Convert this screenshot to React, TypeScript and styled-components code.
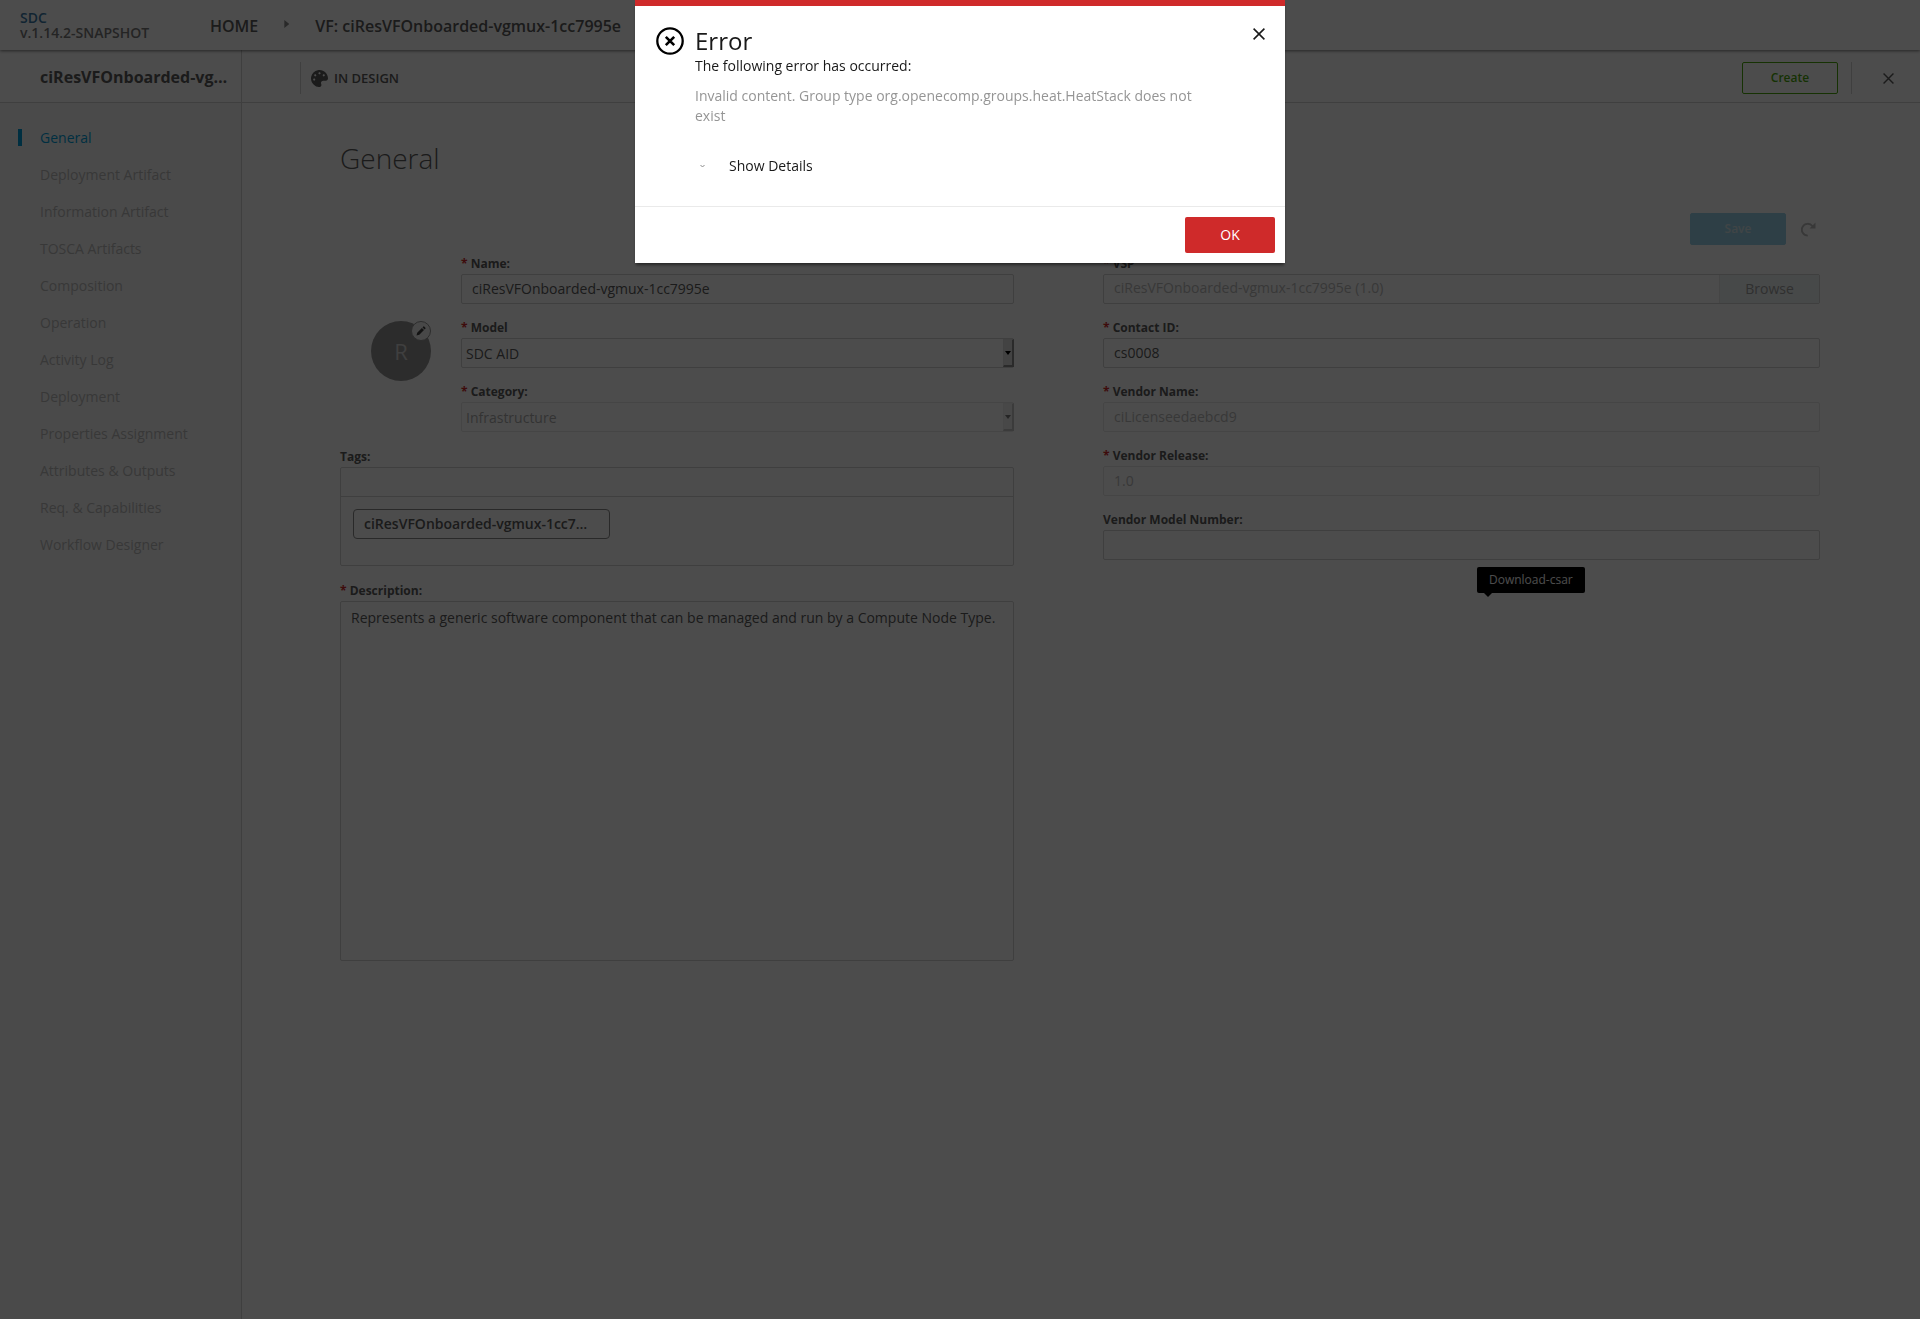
import React from 'react';
import styled, { createGlobalStyle } from 'styled-components';

const GlobalStyle = createGlobalStyle`
  *, *::before, *::after { box-sizing: border-box; }
  body {
    margin: 0;
    background: #fff;
    color: #5a5a5a;
    font-family: 'Open Sans', 'Noto Sans', sans-serif;
    font-size: 14px;
    line-height: 20px;
  }
  button, input, select, textarea { font: inherit; color: inherit; margin: 0; }
  button { cursor: pointer; }
  h1, h2, p, ul { margin: 0; padding: 0; }
`;

const Page = styled.div`
  min-height: 100vh;
  display: flex;
  flex-direction: column;
`;

const TopBar = styled.header`
  position: relative;
  height: 50px;
  display: flex;
  align-items: center;
  padding: 0 20px;
  box-shadow: 0 1px 3px rgba(0, 0, 0, 0.5);
`;

const Brand = styled.div`
  width: 190px;
  line-height: 15px;
  font-weight: 600;
  color: #7a7a7a;
`;

const BrandLink = styled.a`
  display: block;
  color: #3b7ba8;
  text-decoration: none;
`;

const Crumbs = styled.nav`
  display: flex;
  align-items: center;
  gap: 26px;
  padding-top: 2px;
`;

const Crumb = styled.a`
  font-size: 16px;
  line-height: 22px;
  font-weight: 600;
  color: #5a5a5a;
  text-decoration: none;
`;

const CrumbArrow = styled.span`
  width: 5px;
  height: 8px;
  margin-bottom: 4px;
  background: #8a8a8a;
  clip-path: polygon(0 0, 100% 50%, 0 100%);
`;

const Body = styled.div`
  flex: 1;
  display: grid;
  grid-template-columns: 242px 1fr;
`;

const Sidebar = styled.aside`
  border-right: 1px solid #d2d2d2;
  background: #f8f8f8;
  display: flex;
  flex-direction: column;
`;

const SidebarTitle = styled.div`
  height: 53px;
  padding: 16px 12px 0 40px;
  border-bottom: 1px solid #d2d2d2;
  background: #fff;
  font-size: 16px;
  line-height: 22px;
  font-weight: 700;
  white-space: nowrap;
  overflow: hidden;
  text-overflow: ellipsis;
`;

const Menu = styled.ul`
  list-style: none;
  padding: 16px 0;
`;

const MenuItem = styled.li<{ $active?: boolean }>`
  height: 37px;
  display: flex;
  align-items: center;
  padding-left: 18px;
  &::before {
    content: '';
    width: 4px;
    height: 17px;
    margin-right: 18px;
    background: ${p => (p.$active ? '#009fdb' : 'transparent')};
  }
`;

const MenuLink = styled.a<{ $active?: boolean }>`
  color: ${p => (p.$active ? '#009fdb' : '#bcbcbc')};
  text-decoration: none;
`;

const Main = styled.main`
  min-width: 0;
`;

const StatusBar = styled.div`
  height: 53px;
  display: flex;
  align-items: center;
  padding: 4px 20px 0 58px;
  border-bottom: 1px solid #d2d2d2;
`;

const Divider = styled.span`
  width: 1px;
  height: 32px;
  background: #d2d2d2;
`;

const Status = styled.div`
  flex: 1;
  display: flex;
  align-items: center;
  gap: 6px;
  padding-left: 10px;
  font-size: 13px;
  font-weight: 600;
`;

const ActionButton = styled.button<{ $tone: 'create' | 'save' }>`
  width: 96px;
  height: 32px;
  border-radius: 2px;
  font-size: 12px;
  font-weight: 600;
  border: 1px solid ${p => (p.$tone === 'create' ? '#4ca90c' : '#9bd4ea')};
  background: ${p => (p.$tone === 'create' ? '#fff' : '#9bd4ea')};
  color: ${p => (p.$tone === 'create' ? '#4ca90c' : '#d6e6ec')};
`;

const IconButton = styled.button`
  display: flex;
  padding: 0;
  border: 0;
  background: none;
`;

const StatusActions = styled.div`
  display: flex;
  align-items: center;
  gap: 13px;
`;

const CloseSlot = styled.div`
  padding: 0 6px 0 18px;
`;

const Content = styled.div`
  padding: 35px 100px 0 98px;
`;

const Heading = styled.h1`
  font-size: 28px;
  line-height: 40px;
  font-weight: 300;
`;

const SaveRow = styled.div`
  display: flex;
  justify-content: flex-end;
  align-items: center;
  gap: 15px;
  margin: 35px 4px 10px 0;
`;

const Form = styled.form`
  display: grid;
  grid-template-columns: 674fr 717fr;
  column-gap: 89px;
  align-items: start;
`;

const Column = styled.div<{ $gap?: number }>`
  display: flex;
  flex-direction: column;
  gap: ${p => p.$gap ?? 15}px;
  min-width: 0;
`;

const Identity = styled.div`
  display: grid;
  grid-template-columns: 121px 1fr;
`;

const AvatarSlot = styled.div`
  padding: 66px 0 0 31px;
`;

const Avatar = styled.div`
  position: relative;
  width: 60px;
  height: 60px;
  border-radius: 50%;
  background: #959595;
  color: #d2d2d2;
  font-size: 22px;
  line-height: 60px;
  text-align: center;
`;

const EditBadge = styled.button`
  position: absolute;
  top: 0;
  right: 0;
  width: 20px;
  height: 20px;
  padding: 0;
  display: flex;
  align-items: center;
  justify-content: center;
  border: 1px solid #959595;
  border-radius: 50%;
  background: #f2f2f2;
  color: #404040;
`;

const Field = styled.div`
  display: flex;
  flex-direction: column;
  gap: 1px;
`;

const Label = styled.label<{ $required?: boolean }>`
  font-size: 12px;
  line-height: 18px;
  font-weight: 700;
  &::before {
    content: '${p => (p.$required ? '* ' : '')}';
    color: #cf2a2a;
    white-space: pre;
  }
`;

const TextInput = styled.input`
  width: 100%;
  height: 30px;
  padding: 0 10px 2px;
  border: 1px solid #d2d2d2;
  border-radius: 2px;
  background: #fff;
  &:disabled { border-color: #e6e6e6; color: #bcbcbc; }
`;

const SelectBox = styled.div<{ $disabled?: boolean }>`
  position: relative;
  opacity: ${p => (p.$disabled ? 0.5 : 1)};
  &::before {
    content: '';
    position: absolute;
    right: 0;
    top: 1px;
    bottom: 1px;
    width: 11px;
    border: 1px solid #dcdcdc;
    border-right: 2px solid #8c8c8c;
    border-bottom: 2px solid #8c8c8c;
    background: #e2e2e2;
    pointer-events: none;
  }
  &::after {
    content: '';
    position: absolute;
    right: 3px;
    top: 13px;
    width: 6px;
    height: 4px;
    background: #000;
    clip-path: polygon(0 0, 100% 0, 50% 100%);
    pointer-events: none;
  }
`;

const Select = styled.select`
  appearance: none;
  display: block;
  width: 100%;
  height: 30px;
  padding: 2px 14px 0 4px;
  border: 1px solid #d2d2d2;
  border-radius: 2px;
  background: #fff;
  opacity: 1;
`;

const BrowseGroup = styled.div`
  display: flex;
  height: 30px;
  border: 1px solid #d2d2d2;
  border-radius: 2px;
`;

const BrowseText = styled.input`
  flex: 1;
  min-width: 0;
  padding: 0 10px 2px;
  border: 0;
  background: none;
  &:disabled { color: #bcbcbc; }
`;

const BrowseButton = styled.button`
  width: 100px;
  border: 0;
  border-left: 1px solid #e6e6e6;
  background: #eff4f4;
  color: #a0a0a0;
`;

const TagBox = styled.div`
  height: 99px;
  border: 1px solid #d2d2d2;
  border-radius: 2px;
`;

const TagInput = styled.input`
  display: block;
  width: 100%;
  height: 29px;
  padding: 0 10px;
  border: 0;
  border-bottom: 1px solid #d2d2d2;
  background: none;
`;

const Tag = styled.span`
  display: block;
  width: 257px;
  height: 30px;
  margin: 12px;
  padding: 0 20px 0 10px;
  border: 1px solid #8a8a8a;
  border-radius: 4px;
  line-height: 28px;
  font-weight: 600;
  white-space: nowrap;
  overflow: hidden;
  text-overflow: ellipsis;
`;

const TextArea = styled.textarea`
  width: 100%;
  height: 360px;
  padding: 6px 10px;
  border: 1px solid #d2d2d2;
  border-radius: 2px;
  background: #fff;
  resize: none;
`;

const LastField = styled.div`
  position: relative;
`;

const Tooltip = styled.div`
  position: absolute;
  top: calc(100% + 7px);
  left: 374px;
  height: 26px;
  padding: 0 12px;
  border-radius: 2px;
  background: #000;
  color: #fff;
  font-size: 12px;
  line-height: 26px;
  white-space: nowrap;
  &::after {
    content: '';
    position: absolute;
    top: 100%;
    left: 7px;
    width: 8px;
    height: 4px;
    background: #000;
    clip-path: polygon(0 0, 100% 0, 50% 100%);
  }
`;

const Backdrop = styled.div`
  position: fixed;
  inset: 0;
  display: flex;
  justify-content: center;
  align-items: flex-start;
  background: rgba(0, 0, 0, 0.7);
`;

const Dialog = styled.section`
  width: 650px;
  border-top: 6px solid #cf2a2a;
  background: #fff;
  color: #191919;
  box-shadow: 0 3px 3px -1px rgba(0, 0, 0, 0.5);
`;

const DialogBody = styled.div`
  display: grid;
  grid-template-columns: 28px 1fr auto;
  column-gap: 11px;
  padding: 20px 20px 30px 21px;
`;

const DialogIcon = styled.div`
  display: flex;
  align-items: flex-start;
  padding-top: 1px;
`;

const DialogClose = styled(IconButton)`
  align-self: start;
  padding-top: 2px;
`;

const DialogTitle = styled.h2`
  font-size: 24px;
  line-height: 30px;
  font-weight: 400;
`;

const Message = styled.p`
  width: 520px;
  margin: 10px 0 30px;
  color: #959595;
`;

const DetailsToggle = styled(IconButton)`
  align-items: center;
  gap: 24px;
  padding-left: 5px;
`;

const DialogFooter = styled.footer`
  display: flex;
  justify-content: flex-end;
  padding: 10px;
  border-top: 1px solid #eaeaea;
`;

const OkButton = styled.button`
  width: 90px;
  height: 36px;
  border: 0;
  border-radius: 2px;
  background: #cf2a2a;
  color: #fff;
`;

const menu = [
  'General', 'Deployment Artifact', 'Information Artifact', 'TOSCA Artifacts',
  'Composition', 'Operation', 'Activity Log', 'Deployment', 'Properties Assignment',
  'Attributes & Outputs', 'Req. & Capabilities', 'Workflow Designer',
];

const CrossIcon = ({ size }: { size: number }) => (
  <svg width={size} height={size} viewBox="0 0 10 10" fill="none" stroke="currentColor" strokeWidth="1.3">
    <path d="M0.5 0.5 9.5 9.5M9.5 0.5 0.5 9.5" />
  </svg>
);

const PaletteIcon = () => (
  <svg width="17" height="17" viewBox="0 0 512 512" fill="currentColor">
    <path d="M204.3 5C104.900 24.400 24.800 104.300 5.200 203.400c-37 187 131.700 326.400 258.800 306.700 41.200-6.400 61.400-54.600 42.500-91.700-23.100-45.400 9.900-98.400 60.900-98.400h79.700c35.800 0 64.800-29.600 64.900-65.300C511.500 97.100 368.100-26.900 204.300 5zM96 320c-17.700 0-32-14.300-32-32s14.300-32 32-32 32 14.300 32 32-14.300 32-32 32zm32-128c-17.700 0-32-14.300-32-32s14.300-32 32-32 32 14.300 32 32-14.300 32-32 32zm128-64c-17.700 0-32-14.300-32-32s14.300-32 32-32 32 14.300 32 32-14.300 32-32 32zm128 64c-17.700 0-32-14.300-32-32s14.300-32 32-32 32 14.300 32 32-14.300 32-32 32z" />
  </svg>
);

const PencilIcon = () => (
  <svg width="10" height="10" viewBox="0 0 10 10" fill="currentColor">
    <path d="M0.500 9.500 1.200 6.700 5.900 2 8 4.100 3.300 8.800ZM6.500 1.400 7.400 0.500Q7.800 0.200 8.200 0.600L9.400 1.800Q9.800 2.200 9.500 2.600L8.600 3.500Z" />
  </svg>
);

const RevertIcon = () => (
  <svg width="15" height="15" viewBox="0 0 15 15" fill="none">
    <path d="M6.800 13.600A5.900 5.900 0 1 1 11.500 4.200" stroke="#bcbcbc" strokeWidth="1.900" />
    <path d="M14.500 0.500V6.500H8.500Z" fill="#bcbcbc" />
  </svg>
);

const ErrorIcon = () => (
  <svg width="28" height="28" viewBox="0 0 28 28" fill="none" stroke="#000">
    <circle cx="14" cy="14" r="12.700" strokeWidth="2.300" />
    <path d="M9.800 9.800 18.200 18.200M18.200 9.800 9.800 18.200" strokeWidth="2.600" />
  </svg>
);

const ChevronIcon = () => (
  <svg width="5" height="4" viewBox="0 0 5 4" fill="none" stroke="#8a8a8a">
    <path d="M0.500 1 2.500 3 4.500 1" />
  </svg>
);

type InputFieldProps = { id: string; label: string; value: string; required?: boolean; disabled?: boolean };

const InputField = ({ id, label, value, required, disabled }: InputFieldProps) => (
  <Field>
    <Label htmlFor={id} $required={required}>{label}</Label>
    <TextInput id={id} defaultValue={value} disabled={disabled} />
  </Field>
);

const SelectField = ({ id, label, value, disabled }: InputFieldProps) => (
  <Field>
    <Label htmlFor={id} $required>{label}</Label>
    <SelectBox $disabled={disabled}>
      <Select id={id} defaultValue={value} disabled={disabled}>
        <option>{value}</option>
      </Select>
    </SelectBox>
  </Field>
);

export default function App() {
  return (
    <>
      <GlobalStyle />
      <Page>
        <TopBar>
          <Brand>
            <BrandLink href="#">SDC</BrandLink>
            v.1.14.2-SNAPSHOT
          </Brand>
          <Crumbs aria-label="Breadcrumb">
            <Crumb href="#">HOME</Crumb>
            <CrumbArrow />
            <Crumb href="#">VF: ciResVFOnboarded-vgmux-1cc7995e</Crumb>
          </Crumbs>
        </TopBar>
        <Body>
          <Sidebar>
            <SidebarTitle>ciResVFOnboarded-vgmux-1cc7995e</SidebarTitle>
            <Menu>
              {menu.map((item, i) => (
                <MenuItem key={item} $active={i === 0}>
                  <MenuLink href="#" $active={i === 0}>{item}</MenuLink>
                </MenuItem>
              ))}
            </Menu>
          </Sidebar>
          <Main>
            <StatusBar>
              <Divider />
              <Status><PaletteIcon />IN DESIGN</Status>
              <StatusActions>
                <ActionButton $tone="create">Create</ActionButton>
                <Divider />
                <CloseSlot>
                  <IconButton aria-label="Close"><CrossIcon size={11} /></IconButton>
                </CloseSlot>
              </StatusActions>
            </StatusBar>
            <Content>
              <Heading>General</Heading>
              <SaveRow>
                <ActionButton $tone="save">Save</ActionButton>
                <IconButton aria-label="Revert"><RevertIcon /></IconButton>
              </SaveRow>
              <Form>
                <Column $gap={16}>
                  <Identity>
                    <AvatarSlot>
                      <Avatar>
                        R
                        <EditBadge type="button" aria-label="Edit icon"><PencilIcon /></EditBadge>
                      </Avatar>
                    </AvatarSlot>
                    <Column>
                      <InputField id="name" label="Name:" value="ciResVFOnboarded-vgmux-1cc7995e" required />
                      <SelectField id="model" label="Model" value="SDC AID" />
                      <SelectField id="category" label="Category:" value="Infrastructure" disabled />
                    </Column>
                  </Identity>
                  <Field>
                    <Label htmlFor="tags">Tags:</Label>
                    <TagBox>
                      <TagInput id="tags" />
                      <Tag>ciResVFOnboarded-vgmux-1cc7995e</Tag>
                    </TagBox>
                  </Field>
                  <Field>
                    <Label htmlFor="description" $required>Description:</Label>
                    <TextArea
                      id="description"
                      defaultValue="Represents a generic software component that can be managed and run by a Compute Node Type."
                    />
                  </Field>
                </Column>
                <Column>
                  <Field>
                    <Label htmlFor="vsp" $required>VSP</Label>
                    <BrowseGroup>
                      <BrowseText id="vsp" defaultValue="ciResVFOnboarded-vgmux-1cc7995e (1.0)" disabled />
                      <BrowseButton type="button">Browse</BrowseButton>
                    </BrowseGroup>
                  </Field>
                  <InputField id="contact" label="Contact ID:" value="cs0008" required />
                  <InputField id="vendor" label="Vendor Name:" value="ciLicenseedaebcd9" required disabled />
                  <InputField id="release" label="Vendor Release:" value="1.0" required disabled />
                  <LastField>
                    <InputField id="modelNumber" label="Vendor Model Number:" value="" />
                    <Tooltip role="tooltip">Download-csar</Tooltip>
                  </LastField>
                </Column>
              </Form>
            </Content>
          </Main>
        </Body>
      </Page>
      <Backdrop>
        <Dialog role="dialog" aria-modal="true" aria-labelledby="error-title">
          <DialogBody>
            <DialogIcon><ErrorIcon /></DialogIcon>
            <div>
              <DialogTitle id="error-title">Error</DialogTitle>
              <p>The following error has occurred:</p>
              <Message>
                Invalid content. Group type org.openecomp.groups.heat.HeatStack does not exist
              </Message>
              <DetailsToggle><ChevronIcon />Show Details</DetailsToggle>
            </div>
            <DialogClose aria-label="Close dialog"><CrossIcon size={12} /></DialogClose>
          </DialogBody>
          <DialogFooter><OkButton>OK</OkButton></DialogFooter>
        </Dialog>
      </Backdrop>
    </>
  );
}
